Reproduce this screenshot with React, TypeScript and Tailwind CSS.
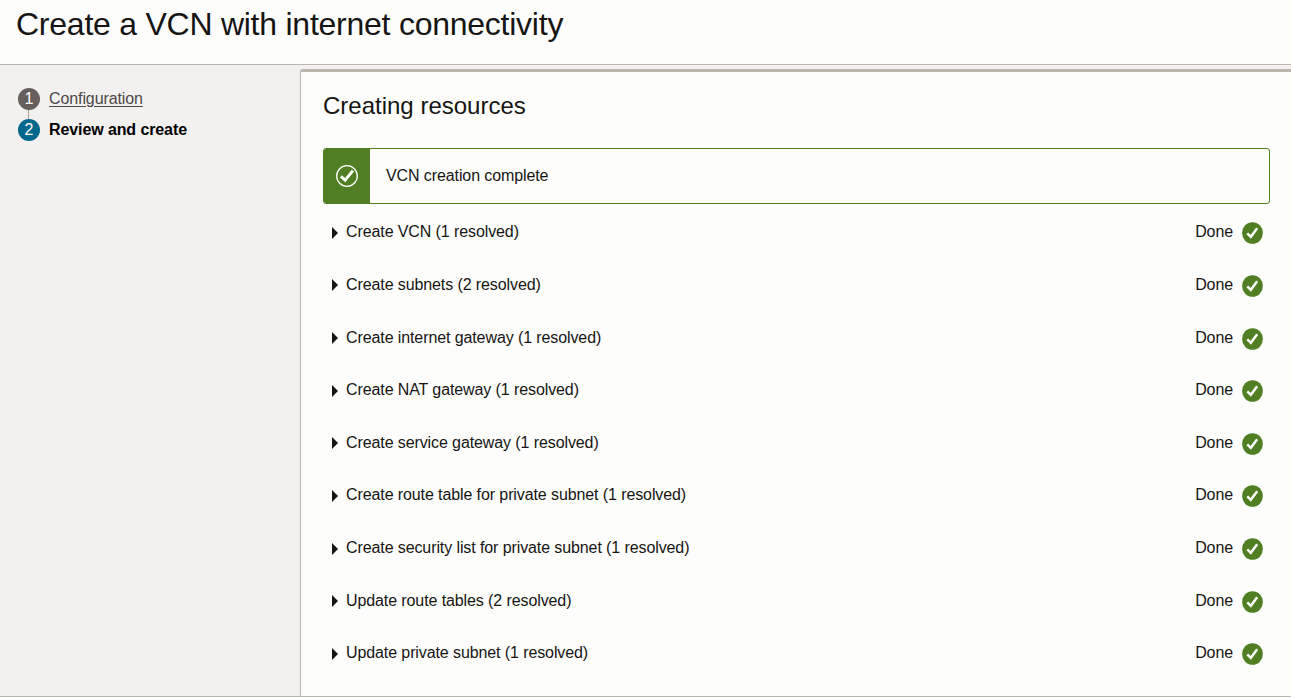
const tasks = [
  'Create VCN (1 resolved)',
  'Create subnets (2 resolved)',
  'Create internet gateway (1 resolved)',
  'Create NAT gateway (1 resolved)',
  'Create service gateway (1 resolved)',
  'Create route table for private subnet (1 resolved)',
  'Create security list for private subnet (1 resolved)',
  'Update route tables (2 resolved)',
  'Update private subnet (1 resolved)',
];

function DoneIcon() {
  return (
    <svg className="h-[22px] w-[21px]" viewBox="0 0 21 22" preserveAspectRatio="none">
      <ellipse cx="10.5" cy="11" rx="10.4" ry="10.8" fill="#4f7f22" />
      <path d="M5.3 11.3 L8.8 14.8 L15.2 6.3" fill="none" stroke="#fff" strokeWidth="2.5" />
    </svg>
  );
}

function BannerIcon() {
  return (
    <svg className="h-[22px] w-[22px]" viewBox="0 0 22 22">
      <circle cx="11" cy="11" r="10.3" fill="none" stroke="#fff" strokeWidth="1.3" />
      <path d="M4.9 11.3 L9.2 15.1 L16.9 5.7" fill="none" stroke="#fff" strokeWidth="2.9" />
    </svg>
  );
}

function TaskRow({ label }: { label: string }) {
  return (
    <li className="flex h-[52.65px] items-start pr-[7px] pl-[9px]">
      <svg className="mt-[6.5px] h-[12px] w-[6px]" viewBox="0 0 6 12">
        <path d="M0 0 L6 6 L0 12 Z" fill="#161513" />
      </svg>
      <span className="ml-2 leading-6">{label}</span>
      <span className="ml-auto leading-6">Done</span>
      <span className="mt-[2px] ml-[9px]">
        <DoneIcon />
      </span>
    </li>
  );
}

export default function App() {
  return (
    <div className="flex h-[697px] w-[1291px] flex-col overflow-hidden border-b border-[#bbb5ad] bg-[#f3f1f0] font-['Liberation_Sans',Arial,sans-serif] text-[16px] tracking-[-0.1px] text-[#161513]">
      <header className="h-[65px] shrink-0 border-b border-[#bbb5ad] bg-[#fdfdfc] pl-4">
        <h1 className="pt-1 text-[32px] leading-10 tracking-[-0.245px]">Create a VCN with internet connectivity</h1>
      </header>
      <div className="flex min-h-0 flex-1">
        <nav className="flex w-[300px] shrink-0 flex-col pt-[23px] pl-[18px]">
          <div className="flex h-[22px] items-center">
            <span className="flex h-[22px] w-[22px] items-center justify-center rounded-full bg-[#665f5b] pb-px text-white">1</span>
            <a className="ml-[9px] text-[#4c4845] underline underline-offset-2">Configuration</a>
          </div>
          <span className="ml-[10px] h-[9px] w-px bg-[#a7a19b]" />
          <div className="flex h-[22px] items-center">
            <span className="flex h-[22px] w-[22px] items-center justify-center rounded-full bg-[#00688c] pb-px text-white">2</span>
            <span className="ml-[9px] font-bold text-[#000000]">Review and create</span>
          </div>
        </nav>
        <main className="mt-1 min-w-0 flex-1 rounded-tl-[3px] border-t-[3px] border-l border-[#bbb5ad] bg-[#fdfdfc] pr-[21px] pl-[22px]">
          <h2 className="pt-[18px] text-[24px] leading-8 tracking-normal">Creating resources</h2>
          <div className="mt-[26px] flex h-14 overflow-hidden rounded-[3px] border border-[#4f7f22]">
            <div className="flex w-[46px] items-center justify-center bg-[#4f7f22]">
              <BannerIcon />
            </div>
            <p className="pt-[15px] pl-4 leading-6">VCN creation complete</p>
          </div>
          <ul className="pt-[16.22px]">
            {tasks.map((label) => (
              <TaskRow key={label} label={label} />
            ))}
          </ul>
        </main>
      </div>
    </div>
  );
}
